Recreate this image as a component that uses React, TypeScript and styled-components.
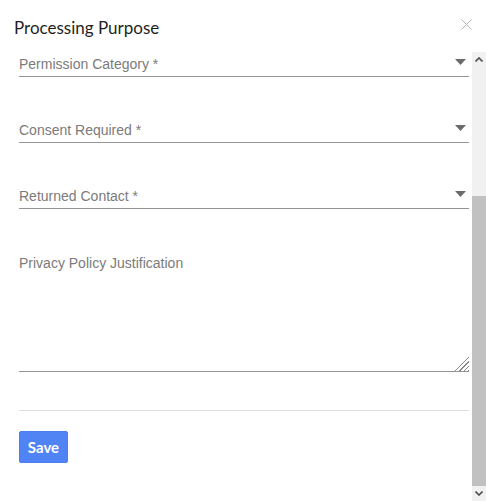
import React from "react";
import styled, { createGlobalStyle } from "styled-components";

const Global = createGlobalStyle`
  html, body { margin: 0; padding: 0; background: #fff; }
  body { font-family: "Liberation Sans", Arial, sans-serif; }
  * { box-sizing: border-box; }
`;

const Modal = styled.div`
  width: 486px;
  height: 501px;
  display: flex;
  flex-direction: column;
  background: #fff;
  overflow: hidden;
`;

const Header = styled.div`
  height: 52px;
  flex: 0 0 52px;
  display: flex;
  align-items: center;
  justify-content: space-between;
  padding: 0 14px 0 14px;
`;

const Title = styled.h2`
  margin: 0;
  margin-top: 2px;
  font-family: Lato, "Noto Sans", sans-serif;
  font-weight: 400;
  font-size: 17px;
  color: #1f1f1f;
`;

const CloseButton = styled.button`
  border: 0;
  background: none;
  padding: 0;
  width: 11px;
  height: 11px;
  display: flex;
  cursor: pointer;
  margin-top: -4px;
`;

const Body = styled.div`
  flex: 1;
  display: flex;
  min-height: 0;
`;

const Content = styled.div`
  flex: 1;
  padding: 0 3px 0 19px;
  display: flex;
  flex-direction: column;
`;

const SelectField = styled.div`
  height: 25px;
  padding: 4px 0 4px 0;
  border-bottom: 1px solid #949494;
  display: flex;
  align-items: center;
  justify-content: space-between;
  margin-bottom: 41px;
`;

const Label = styled.span`
  font-size: 14px;
  line-height: 16px;
  color: #7b7b7b;
`;

const Caret = styled.svg`
  width: 11px;
  height: 6px;
  margin-right: 3px;
  margin-top: -5px;
`;

const TextArea = styled.textarea`
  display: block;
  width: 100%;
  height: 122px;
  border: 0;
  border-bottom: 1px solid #949494;
  padding: 5px 0 0 0;
  margin: 0;
  font-family: "Liberation Sans", Arial, sans-serif;
  font-size: 14px;
  line-height: 16px;
  color: #333;
  resize: vertical;
  outline: none;
  &::placeholder { color: #7b7b7b; }
  &::-webkit-resizer {
    background:
      linear-gradient(135deg, #fff 50%, transparent 50%),
      repeating-linear-gradient(135deg, transparent 0 2px, #8a8a8a 2px 3px);
  }
`;

const Divider = styled.div`
  height: 1px;
  background: #dedede;
  margin-top: 38px;
`;

const SaveButton = styled.button`
  margin-top: 20px;
  align-self: flex-start;
  width: 49px;
  height: 32px;
  border: 1px solid #4a7ff0;
  border-radius: 2px;
  background: #5084f4;
  color: #fff;
  font-family: Lato, "Noto Sans", sans-serif;
  font-weight: 700;
  font-size: 15px;
  padding: 0;
  cursor: pointer;
`;

const Scrollbar = styled.div`
  width: 14px;
  flex: 0 0 14px;
  background: #f1f1f1;
  display: flex;
  flex-direction: column;
`;

const ArrowBox = styled.div`
  height: 15px;
  flex: 0 0 15px;
  display: flex;
  align-items: center;
  justify-content: center;
`;

const Track = styled.div`
  flex: 1;
  display: flex;
  flex-direction: column;
  justify-content: flex-end;
`;

const Thumb = styled.div`
  height: 290px;
  background: #c1c1c1;
`;

const Select = ({ label }: { label: string }) => (
  <SelectField>
    <Label>{label}</Label>
    <Caret viewBox="0 0 11 6">
      <path d="M0 0 H11 L5.5 6 Z" fill="#6b6b6b" />
    </Caret>
  </SelectField>
);

export default function App() {
  return (
    <>
      <Global />
      <Modal>
        <Header>
          <Title>Processing Purpose</Title>
          <CloseButton aria-label="Close">
            <svg width="11" height="11" viewBox="0 0 11 11">
              <path d="M0.5 0.5 L10.5 10.5 M10.5 0.5 L0.5 10.5" stroke="#b5b5b5" strokeWidth="1" />
            </svg>
          </CloseButton>
        </Header>
        <Body>
          <Content>
            <Select label="Permission Category *" />
            <Select label="Consent Required *" />
            <Select label="Returned Contact *" />
            <TextArea placeholder="Privacy Policy Justification" />
            <Divider />
            <SaveButton>Save</SaveButton>
          </Content>
          <Scrollbar>
            <ArrowBox>
              <svg width="8" height="5" viewBox="0 0 8 5">
                <path d="M0.5 4.5 L4 1 L7.5 4.5" stroke="#505050" strokeWidth="1.6" fill="none" />
              </svg>
            </ArrowBox>
            <Track>
              <Thumb />
            </Track>
            <ArrowBox>
              <svg width="8" height="5" viewBox="0 0 8 5">
                <path d="M0.5 0.5 L4 4 L7.5 0.5" stroke="#505050" strokeWidth="1.6" fill="none" />
              </svg>
            </ArrowBox>
          </Scrollbar>
        </Body>
      </Modal>
    </>
  );
}
